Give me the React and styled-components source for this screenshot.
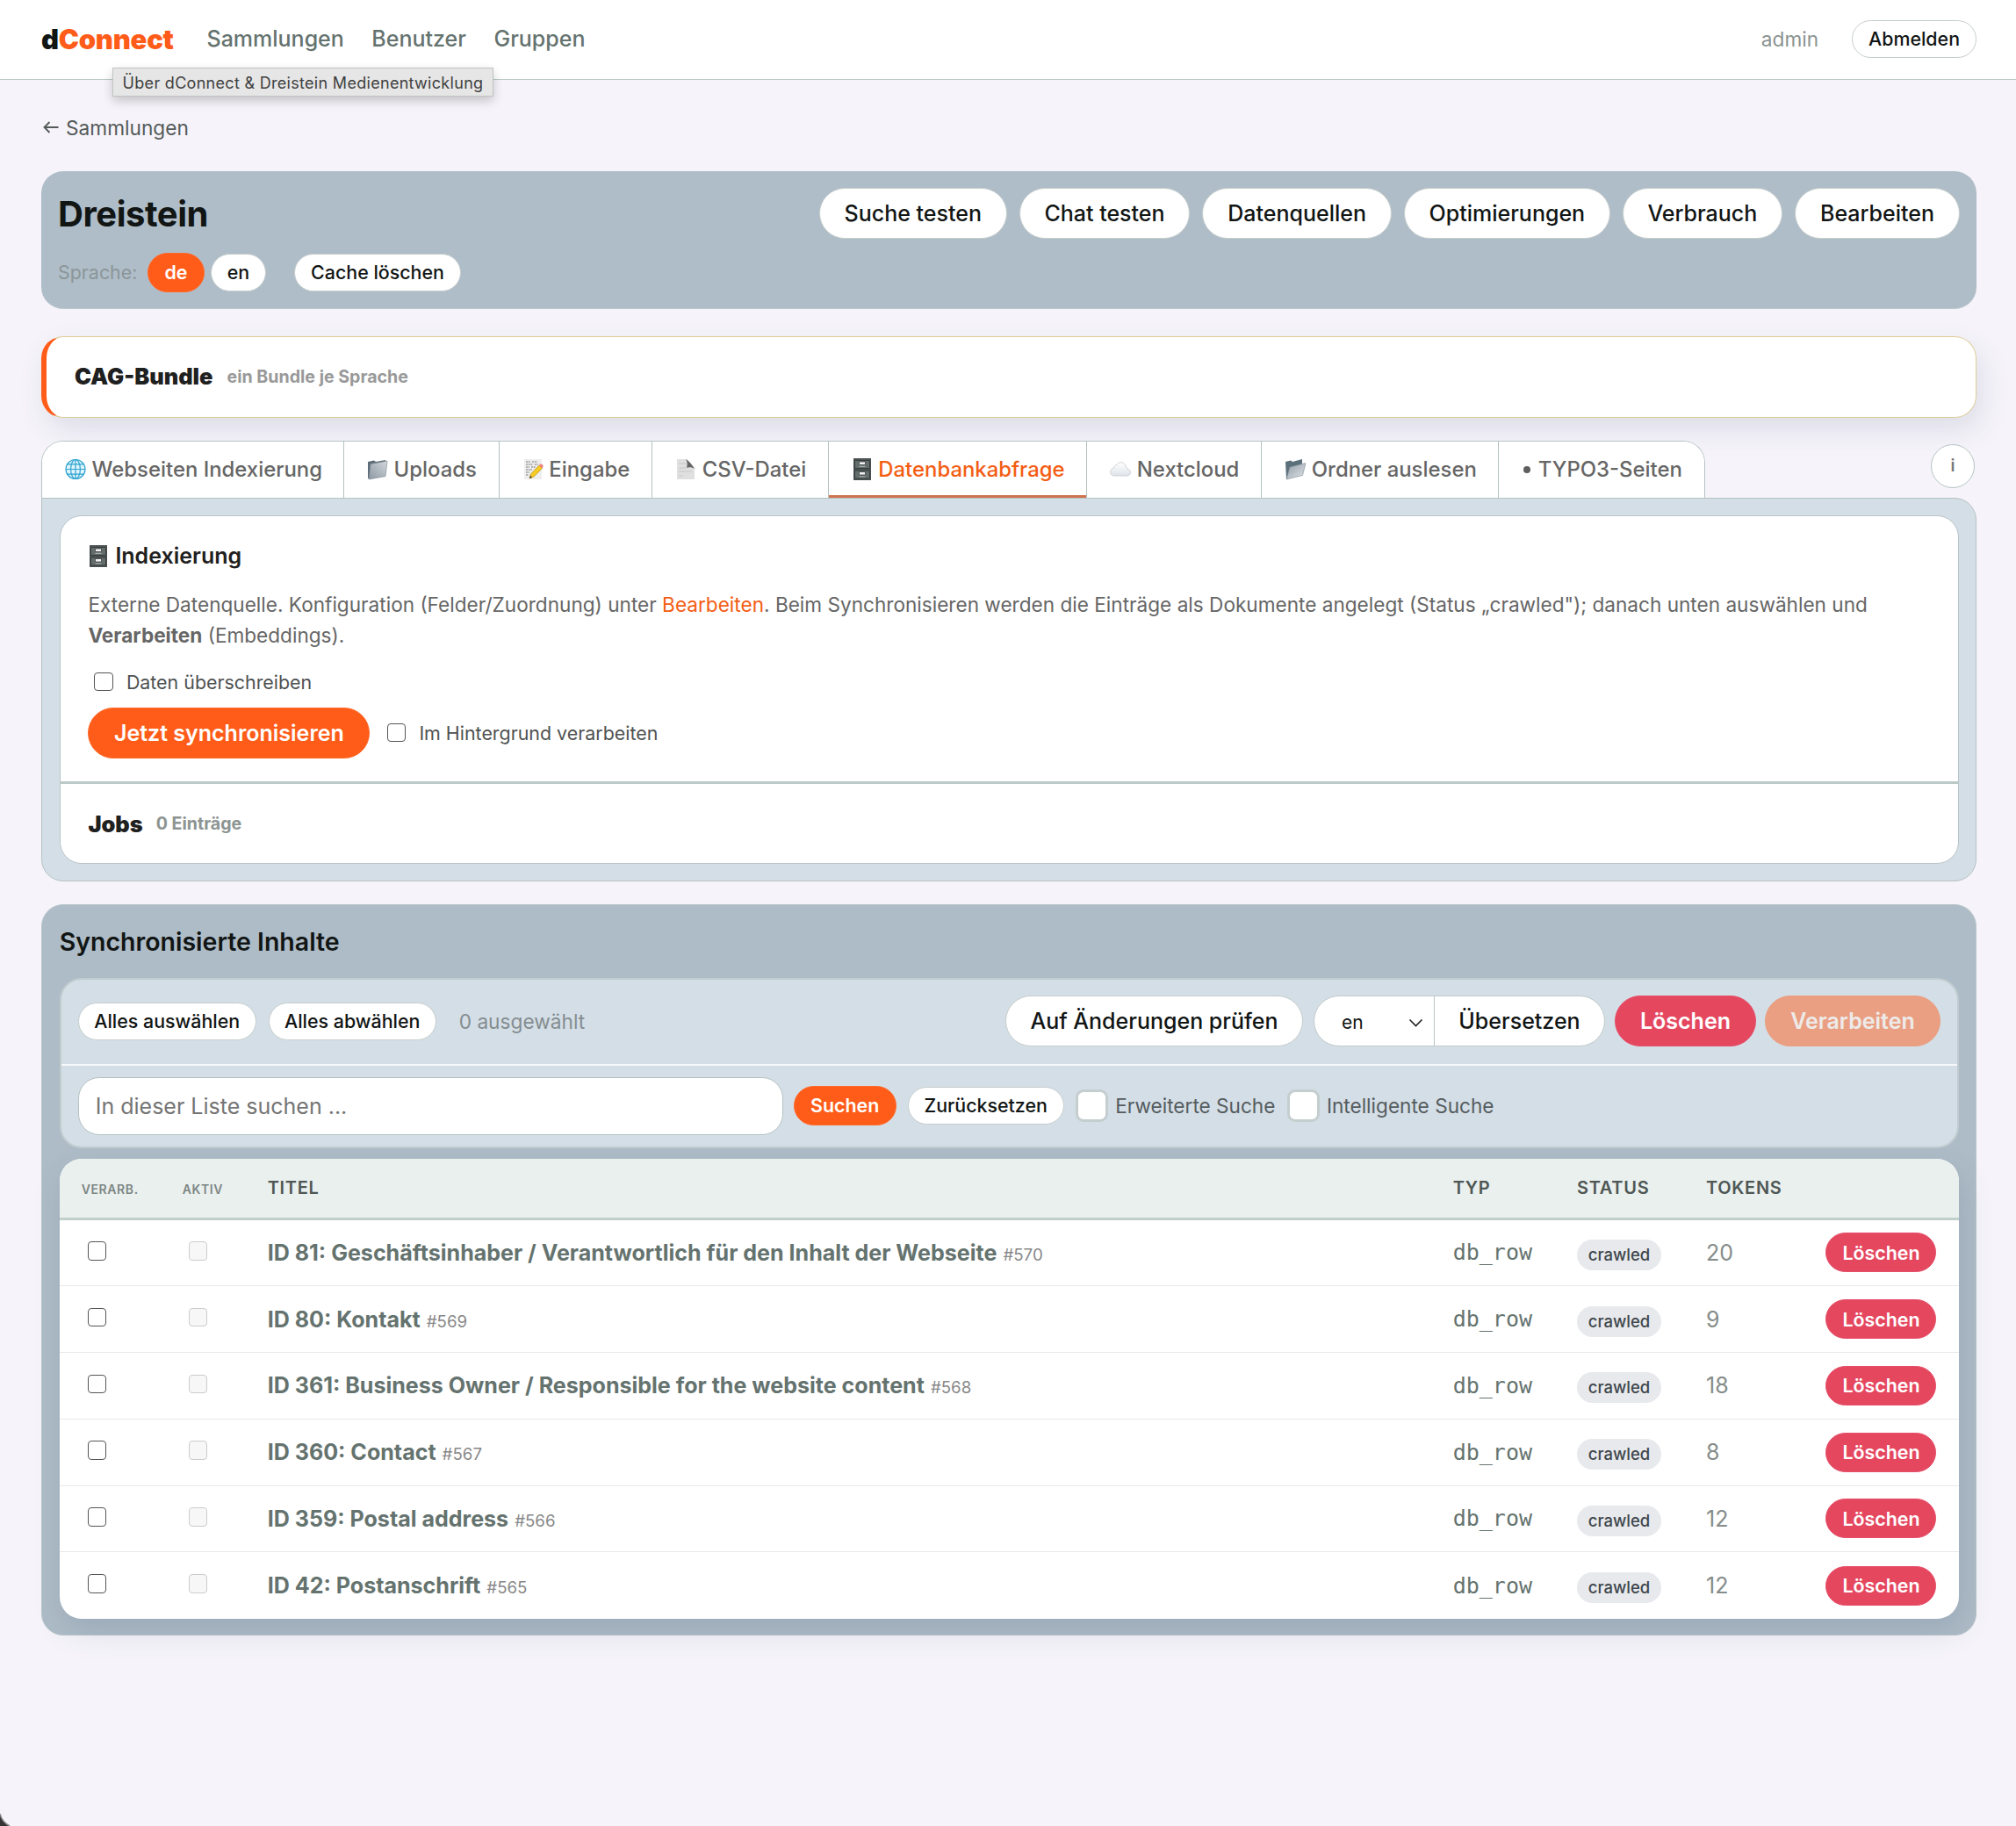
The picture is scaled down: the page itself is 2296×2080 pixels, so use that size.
import React, { useState } from 'react'
import styled, { createGlobalStyle, css } from 'styled-components'

const GlobalStyle = createGlobalStyle`
  * {
    box-sizing: border-box;
  }

  body {
    margin: 0;
    min-height: 2080px;
    background: #f6f4fa;
    color: #111514;
    font-family: Inter, "Liberation Sans", sans-serif;
    font-size: 25px;
    overflow: hidden;
  }

  button, input {
    font-family: inherit;
  }
`

const Page = styled.div`
  position: relative;
  height: 2080px;
  overflow: hidden;
  white-space: nowrap;
`

const Header = styled.header`
  position: relative;
  display: flex;
  align-items: center;
  height: 91px;
  padding: 0 45px 2px 47px;
  background: #fff;
  border-bottom: 1.5px solid #b9c9c5;
`

const Logo = styled.div`
  width: 188.5px;
  font-size: 31px;
  font-weight: 900;
  letter-spacing: -0.25px;

  span {
    color: #ff5c19;
  }
`

const Nav = styled.nav`
  display: flex;
  gap: 31.5px;
  flex: 1;
`

const NavLink = styled.a`
  font-size: 25px;
  font-weight: 500;
  color: #65736f;
`

const UserName = styled.span`
  margin-right: 38px;
  font-size: 22.6px;
  color: #8b9391;
`

const Tooltip = styled.div`
  position: absolute;
  z-index: 5;
  left: 128px;
  top: 77px;
  width: 434px;
  height: 33px;
  border: 1px solid #bfc3c4;
  background: #e6e6e6;
  box-shadow: 0 5px 12px rgba(0, 0, 0, 0.2);
  color: #3f3f3f;
  font-size: 18px;
  letter-spacing: 0.3px;
  line-height: 33px;
  text-align: center;
`

const Main = styled.main`
  padding: 0 45px 0 47px;
`

const BackLink = styled.a`
  display: flex;
  align-items: center;
  gap: 7px;
  margin: 36px 0 32px;
  height: 36px;
  padding-left: 1px;
  font-size: 22.7px;
  color: #555b5a;

  svg {
    width: 20px;
    height: 20px;
  }
`

const pill = css`
  display: flex;
  align-items: center;
  justify-content: center;
  padding: 0;
  border: 1.5px solid #c6cdcc;
  border-radius: 30px;
  background: #fff;
  color: #111514;
  white-space: nowrap;
`

const variants = {
  primary: css`
    background: #ff5c19;
    border-color: #ff6a2a;
    color: #fff;
    font-weight: 600;
  `,
  danger: css`
    background: #e5475f;
    border-color: #e5506a;
    color: #fff;
    font-weight: 600;
  `,
  muted: css`
    background: #ea9f82;
    border-color: #ea9f82;
    color: #edebe9;
    font-weight: 600;
  `,
}

const Button = styled.button`
  ${pill}
  flex: none;
  width: ${props => props.$w}px;
  height: ${props => props.$h || 58}px;
  font-size: 25px;
  font-weight: 500;
  ${props => variants[props.$kind]}
`

const SmallButton = styled.button`
  ${pill}
  flex: none;
  width: ${props => props.$w}px;
  height: ${props => props.$h || 43}px;
  font-size: 21.4px;
  font-weight: 500;
  ${props => variants[props.$kind]}
`

const Hero = styled.section`
  height: 157px;
  padding: 19px 19px 0 19px;
  border-radius: 25px;
  background: #afbdc8;
  border-bottom: 1.5px solid #bccacd;
`

const HeroTop = styled.div`
  display: flex;
  align-items: center;
  justify-content: space-between;
  height: 58px;
`

const Title = styled.h1`
  margin: 0;
  font-size: 40px;
  font-weight: 700;
  letter-spacing: -0.45px;
`

const HeroActions = styled.div`
  display: flex;
  gap: 14.2px;
`

const LanguageRow = styled.div`
  display: flex;
  align-items: center;
  height: 45px;
  margin-top: 15.5px;
`

const LanguageLabel = styled.span`
  width: 102px;
  font-size: 21.4px;
  color: #8b9698;
`

const Spacer = styled.div`
  flex: ${props => (props.$w ? 'none' : 1)};
  width: ${props => props.$w || 0}px;
`

const BundleCard = styled.section`
  display: flex;
  align-items: center;
  gap: 16px;
  height: 93px;
  margin-top: 31px;
  padding-left: 32px;
  padding-bottom: 2px;
  border: 1.5px solid #decd98;
  border-left: 6px solid #ff5c19;
  border-radius: 25px;
  background: #fff;
  box-shadow: 6px 14px 32px rgba(60, 70, 110, 0.13);
`

const Strong = styled.h2`
  margin: 0;
  font-size: 25.4px;
  font-weight: 900;
  color: #1f2020;
`

const Hint = styled.span`
  font-size: 19.6px;
  font-weight: 700;
  color: ${props => props.$color || '#999'};
`

const TabBar = styled.div`
  position: relative;
  display: flex;
  height: 65px;
  margin-top: 26px;
`

const TabList = styled.div`
  display: flex;
  border: 1.5px solid #b4c2c2;
  border-bottom: 0;
  border-radius: 25px 25px 0 0;
  background: #fff;
  overflow: hidden;
`

const Tab = styled.button`
  display: flex;
  align-items: center;
  gap: 6.5px;
  width: ${props => props.$w}px;
  padding: 0 0 2px 26px;
  border: 0;
  border-right: 1.5px solid #b4c2c2;
  background: #fff;
  color: #666;
  font-size: 23.9px;
  font-weight: 500;
  white-space: nowrap;
  ${props => props.$active && css`
    color: #f45d14;
    box-shadow: inset 0 -3px 0 #cf7350;
  `}

  &:last-child {
    border-right: 0;
  }

  svg {
    flex: none;
    width: 24px;
    height: 25px;
  }
`

const Dot = styled.span`
  width: 8px;
  height: 8px;
  margin: 2px 2px 0 2px;
  border-radius: 50%;
  background: #5f5f5f;
`

const InfoButton = styled.button`
  ${pill}
  width: 50px;
  height: 50px;
  margin: 3.5px 2px 0 auto;
  border-color: #b4c2c2;
  border-radius: 50%;
  color: #777;
  font-size: 19px;
  font-weight: 600;
`

const TabPanel = styled.section`
  height: 437px;
  padding: 19px 19px 0 19.7px;
  border: 1.5px solid #b4c2c2;
  border-radius: 0 25px 25px 25px;
  background: #d4dee6;
`

const Card = styled.div`
  height: 397px;
  border: 1.5px solid #b9c4c8;
  border-radius: 25px;
  background: #fff;
`

const IndexSection = styled.div`
  height: 305px;
  padding: 27px 31.7px 0;
  border-bottom: 3px solid #bccac7;
`

const CardTitle = styled.h3`
  display: flex;
  align-items: center;
  gap: 7px;
  height: 36px;
  margin: 0;
  font-size: 25px;
  font-weight: 600;
  color: #1f2020;

  svg {
    width: 24px;
    height: 25px;
  }
`

const Description = styled.p`
  margin: 19.5px 0 17.5px;
  font-size: 22.6px;
  line-height: 35.3px;
  color: #666;

  a {
    color: #f45d14;
  }
`

const CheckRow = styled.label`
  display: flex;
  align-items: center;
  gap: 15px;
  height: 36px;
  margin-left: ${props => props.$indent || 0}px;
  font-size: 21.4px;
  color: #4f5252;
`

const Checkbox = styled.input`
  appearance: none;
  flex: none;
  width: 21.5px;
  height: 21.5px;
  margin: 0;
  border: 1.5px solid #555;
  border-radius: 4px;
  background: #fff;

  &:disabled {
    border-color: #ccc;
    background: #f7f7f7;
  }
`

const SyncRow = styled.div`
  display: flex;
  align-items: center;
  margin-top: 11px;
`

const JobsSection = styled.div`
  display: flex;
  align-items: center;
  gap: 15px;
  height: 90px;
  padding: 0 31.7px;
`

const ContentPanel = styled.section`
  height: 833px;
  margin-top: 26px;
  padding: 0 19px 0 19.7px;
  border: 1.5px solid #b9c6ca;
  border-radius: 25px;
  background: #aebcc7;
`

const PanelTitle = styled.h2`
  margin: 0;
  height: 83px;
  font-size: 28.5px;
  font-weight: 600;
  line-height: 84px;
`

const Toolbar = styled.div`
  height: 194px;
  border: 2px solid #c1cccf;
  border-radius: 25px;
  background: #d4dee6;
`

const ToolRow = styled.div`
  display: flex;
  align-items: center;
  height: 98px;
  padding: 0 19px 1.5px 19px;
  border-bottom: 2px solid #f6f8fa;

  &:last-child {
    height: 92px;
    padding-bottom: 2px;
    border-bottom: 0;
  }
`

const Count = styled.span`
  margin-left: 26px;
  font-size: 22.7px;
  color: #848d91;
`

const TranslateGroup = styled.div`
  display: flex;
  width: 332px;
  height: 58px;
  margin: 0 11px 0 12px;
  border: 1.5px solid #c1caca;
  border-radius: 30px;
  background: #fff;
`

const LanguageSelect = styled.div`
  display: flex;
  align-items: center;
  justify-content: space-between;
  width: 137px;
  padding: 3px 12px 0 31px;
  border-right: 1.5px solid #b9c4c4;
  font-size: 21px;

  svg {
    width: 17px;
    height: 10px;
  }
`

const TranslateLabel = styled.div`
  flex: 1;
  font-size: 25px;
  font-weight: 500;
  line-height: 56px;
  text-align: center;
`

const SearchInput = styled.input`
  width: 803px;
  height: 66px;
  margin: 1px 12px 0 0;
  padding: 0 19px;
  border: 1.5px solid #b4c2c2;
  border-radius: 24px;
  background: #fff;
  font-size: 25px;

  &::placeholder {
    color: #757575;
  }
`

const Option = styled.label`
  display: flex;
  align-items: center;
  gap: 8px;
  margin-left: 13.5px;
  font-size: 22.6px;
  color: #555c60;
`

const BigCheckbox = styled.input`
  appearance: none;
  width: 37px;
  height: 37px;
  margin: 0;
  border: 3px solid #c5cecf;
  border-radius: 9px;
  background: #fff;
`

const Table = styled.div`
  height: 524px;
  margin-top: 12px;
  border-radius: 25px;
  background: #fff;
  box-shadow: 4px 14px 34px rgba(60, 80, 120, 0.16);
  overflow: hidden;
`

const rowGrid = css`
  display: grid;
  grid-template-columns: 140px 97px 1350px 141.3px 147px 136.5px 1fr;
  align-items: center;
`

const TableHead = styled.div`
  ${rowGrid}
  height: 69.5px;
  border-bottom: 3px solid #bfcfca;
  background: #eaf0ee;
  color: #4f5755;
  font-size: 20px;
  font-weight: 600;
  letter-spacing: 0.7px;
`

const SmallHead = styled.span`
  padding: 3px 0 0 ${props => props.$pad || 0}px;
  font-size: 14px;
  letter-spacing: 0.6px;
  color: #7d8684;
`

const Row = styled.div`
  ${rowGrid}
  height: 75.75px;
  border-bottom: 1.5px solid #e6eae9;

  &:last-child {
    border-bottom: 0;
  }
`

const CheckCell = styled.div`
  display: flex;
  padding: 0 0 4px ${props => props.$pad}px;
`

const ItemTitle = styled.div`
  font-size: 25.05px;
  font-weight: 700;
  color: #65736f;

  span {
    margin-left: 7px;
    font-size: 18.7px;
    font-weight: 400;
    color: #888;
  }
`

const Mono = styled.code`
  font-family: "DejaVu Sans Mono", "Liberation Mono", monospace;
  font-size: 25px;
  color: #65736f;
`

const StatusBadge = styled.span`
  justify-self: start;
  width: 96px;
  height: 35px;
  margin-top: 5px;
  border-radius: 18px;
  background: #e7e9ec;
  color: #3f474d;
  font-size: 18.5px;
  font-weight: 500;
  line-height: 34px;
  text-align: center;
`

const Tokens = styled.span`
  font-size: 25px;
  color: #858c8a;
`

const WindowCorner = styled.svg`
  position: absolute;
  left: 0;
  bottom: 0;
  width: 12px;
  height: 14px;
`

const GlobeIcon = () => (
  <svg viewBox="0 0 24 24" fill="none" stroke="#2ea3cf" strokeWidth="1.2">
    <circle cx="12" cy="12" r="11" fill="#dff4fc" />
    <ellipse cx="12" cy="12" rx="5.4" ry="11" />
    <path d="M12 1v22M1 12h22M3 6.3h18M3 17.7h18" />
  </svg>
)

const FolderIcon = () => (
  <svg viewBox="0 0 24 25">
    <defs>
      <linearGradient id="folder" x1="0" y1="1" x2="1" y2="0">
        <stop offset="0" stopColor="#8c98a3" />
        <stop offset="1" stopColor="#d3d7db" />
      </linearGradient>
    </defs>
    <path d="M1 4l7-1.500 2 1.500 11-2v18L1 23z" fill="#5d6d79" />
    <path d="M4 6.500L23 3l-2 17.500L2 24z" fill="url(#folder)" stroke="#73818c" strokeWidth=".6" />
  </svg>
)

const OpenFolderIcon = () => (
  <svg viewBox="0 0 24 25">
    <defs>
      <linearGradient id="openFolder" x1="0" y1="0" x2="1" y2="1">
        <stop offset="0" stopColor="#909ca6" />
        <stop offset="1" stopColor="#e3e6e9" />
      </linearGradient>
    </defs>
    <path d="M1 4l6-1.500 2 1.500 11-3v16L2 24z" fill="#5c707c" />
    <path d="M6 10L24 5.500l-3.500 14L2 24z" fill="url(#openFolder)" stroke="#7d8c96" strokeWidth=".6" />
  </svg>
)

const MemoIcon = () => (
  <svg viewBox="0 0 24 25">
    <path d="M2 1h20v23H2z" fill="#eee" />
    <path d="M4 4h5m2 0h6M4 7h8m2 0h4M4 10h4m2 0h5M4 13h7M4 16h4M4 19h3" stroke="#777" strokeWidth="1.100" strokeDasharray="2 .7" />
    <path d="M8 23l1.500-5L19 8l3.500 3.500L13 21z" fill="#f8cb22" stroke="#a78415" strokeWidth=".6" />
    <path d="M19 8l1.500-1.500q2-.5 3.300 2.300L22.500 11.500z" fill="#ee7f79" />
    <path d="M8 23l1-3.200 2 2z" fill="#443c30" />
  </svg>
)

const PageIcon = () => (
  <svg viewBox="0 0 24 25">
    <path d="M2 1h11l9 10v13H2z" fill="#e0e0e0" />
    <path d="M12 1c4 2.500 7 6 10 11-3-2-6-2.200-9-1.200C14.200 7 13.800 4 12 1z" fill="#666" />
    <path d="M4 6h8M4 11h8M4 15h15M4 20h5" stroke="#c6c6c6" />
  </svg>
)

const CabinetIcon = () => (
  <svg viewBox="0 0 24 25">
    <path d="M2 0h20v25H2z" fill="#4c5252" />
    <path d="M3.500 2.500h17v9h-17zM3.500 14h17v9h-17z" fill="#656c6c" stroke="#383e3e" />
    <path d="M8.500 4h7v3.500h-7zM8.500 15.500h7V19h-7z" fill="#f2f2f2" stroke="#3b4040" strokeWidth=".8" />
    <path d="M8.500 9.300h7M8.500 20.800h7" stroke="#a2a8a8" strokeWidth="1.200" />
  </svg>
)

const CloudIcon = () => (
  <svg viewBox="0 0 24 25">
    <defs>
      <linearGradient id="cloud" x1="0" y1="0" x2="0" y2="1">
        <stop offset="0" stopColor="#fff" />
        <stop offset="1" stopColor="#dfe4ea" />
      </linearGradient>
    </defs>
    <path
      d="M5 20C1.500 20 .6 17.500.6 15.500.6 13 2.500 11 5 11c-.3-2 1.200-3.600 3-3.400C8.800 5.500 10.800 4.500 13 4.700c2.700.2 4.600 2 4.700 4.600 1.500.3 2.200 1.500 2 3 2.500.2 3.800 1.700 3.700 3.900C23.300 18.700 21.500 20 19 20z"
      fill="url(#cloud)"
      stroke="#c5cbd2"
      strokeWidth=".8"
    />
  </svg>
)

const ArrowLeft = () => (
  <svg viewBox="0 0 20 20" fill="none" stroke="currentColor" strokeWidth="1.900">
    <path d="M18.500 10H2.500M8.500 4L2.500 10l6 6" />
  </svg>
)

const Chevron = () => (
  <svg viewBox="0 0 17 10" fill="none" stroke="#222" strokeWidth="1.600">
    <path d="M1.500 1.500l7 7 7-7" />
  </svg>
)

const heroActions = [
  { label: 'Suche testen', w: 213.5 },
  { label: 'Chat testen', w: 194.5 },
  { label: 'Datenquellen', w: 215.5 },
  { label: 'Optimierungen', w: 234.5 },
  { label: 'Verbrauch', w: 182 },
  { label: 'Bearbeiten', w: 188 },
]

const tabs = [
  { label: 'Webseiten Indexierung', icon: GlobeIcon, w: 344 },
  { label: 'Uploads', icon: FolderIcon, w: 176.8 },
  { label: 'Eingabe', icon: MemoIcon, w: 174.5 },
  { label: 'CSV-Datei', icon: PageIcon, w: 200.5 },
  { label: 'Datenbankabfrage', icon: CabinetIcon, w: 294.5 },
  { label: 'Nextcloud', icon: CloudIcon, w: 199 },
  { label: 'Ordner auslesen', icon: OpenFolderIcon, w: 270 },
  { label: 'TYPO3-Seiten', icon: Dot, w: 233.5 },
]

const rows = [
  { id: 570, title: 'ID 81: Geschäftsinhaber / Verantwortlich für den Inhalt der Webseite', tokens: 20 },
  { id: 569, title: 'ID 80: Kontakt', tokens: 9 },
  { id: 568, title: 'ID 361: Business Owner / Responsible for the website content', tokens: 18 },
  { id: 567, title: 'ID 360: Contact', tokens: 8 },
  { id: 566, title: 'ID 359: Postal address', tokens: 12 },
  { id: 565, title: 'ID 42: Postanschrift', tokens: 12 },
]

const App = () => {
  const [activeTab, setActiveTab] = useState('Datenbankabfrage')
  const [query, setQuery] = useState('')

  return (
    <Page>
      <GlobalStyle />
      <Header>
        <Logo>d<span>Connect</span></Logo>
        <Nav>
          <NavLink>Sammlungen</NavLink>
          <NavLink>Benutzer</NavLink>
          <NavLink>Gruppen</NavLink>
        </Nav>
        <UserName>admin</UserName>
        <SmallButton $w={142}>Abmelden</SmallButton>
        <Tooltip>Über dConnect &amp; Dreistein Medienentwicklung</Tooltip>
      </Header>

      <Main>
        <BackLink><ArrowLeft />Sammlungen</BackLink>

        <Hero>
          <HeroTop>
            <Title>Dreistein</Title>
            <HeroActions>
              {heroActions.map(action => (
                <Button key={action.label} $w={action.w}>{action.label}</Button>
              ))}
            </HeroActions>
          </HeroTop>
          <LanguageRow>
            <LanguageLabel>Sprache:</LanguageLabel>
            <SmallButton $w={65} $h={45} $kind="primary">de</SmallButton>
            <Spacer $w={7} />
            <SmallButton $w={63}>en</SmallButton>
            <Spacer $w={32} />
            <SmallButton $w={190}>Cache löschen</SmallButton>
          </LanguageRow>
        </Hero>

        <BundleCard>
          <Strong>CAG-Bundle</Strong>
          <Hint>ein Bundle je Sprache</Hint>
        </BundleCard>

        <TabBar>
          <TabList>
            {tabs.map(({ label, icon: Icon, w }) => (
              <Tab key={label} $w={w} $active={label === activeTab} onClick={() => setActiveTab(label)}>
                <Icon />
                {label}
              </Tab>
            ))}
          </TabList>
          <InfoButton>i</InfoButton>
        </TabBar>

        <TabPanel>
          <Card>
            <IndexSection>
              <CardTitle><CabinetIcon />Indexierung</CardTitle>
              <Description>
                Externe Datenquelle. Konfiguration (Felder/Zuordnung) unter <a>Bearbeiten</a>. Beim Synchronisieren
                {' '}werden die Einträge als Dokumente angelegt (Status „crawled"); danach unten auswählen und
                <br />
                <b>Verarbeiten</b> (Embeddings).
              </Description>
              <CheckRow $indent={7}>
                <Checkbox type="checkbox" />
                Daten überschreiben
              </CheckRow>
              <SyncRow>
                <Button $w={321} $kind="primary">Jetzt synchronisieren</Button>
                <CheckRow $indent={19.5}>
                  <Checkbox type="checkbox" />
                  Im Hintergrund verarbeiten
                </CheckRow>
              </SyncRow>
            </IndexSection>
            <JobsSection>
              <Strong>Jobs</Strong>
              <Hint $color="#8d9492">0 Einträge</Hint>
            </JobsSection>
          </Card>
        </TabPanel>

        <ContentPanel>
          <PanelTitle>Synchronisierte Inhalte</PanelTitle>
          <Toolbar>
            <ToolRow>
              <SmallButton $w={203}>Alles auswählen</SmallButton>
              <Spacer $w={14} />
              <SmallButton $w={191}>Alles abwählen</SmallButton>
              <Count>0 ausgewählt</Count>
              <Spacer />
              <Button $w={339}>Auf Änderungen prüfen</Button>
              <TranslateGroup>
                <LanguageSelect>en<Chevron /></LanguageSelect>
                <TranslateLabel>Übersetzen</TranslateLabel>
              </TranslateGroup>
              <Button $w={161} $kind="danger">Löschen</Button>
              <Spacer $w={10} />
              <Button $w={200} $kind="muted">Verarbeiten</Button>
            </ToolRow>
            <ToolRow>
              <SearchInput
                placeholder="In dieser Liste suchen ..."
                value={query}
                onChange={e => setQuery(e.target.value)}
              />
              <SmallButton $w={117} $h={45} $kind="primary">Suchen</SmallButton>
              <Spacer $w={13} />
              <SmallButton $w={178}>Zurücksetzen</SmallButton>
              <Option><BigCheckbox type="checkbox" />Erweiterte Suche</Option>
              <Option><BigCheckbox type="checkbox" />Intelligente Suche</Option>
            </ToolRow>
          </Toolbar>

          <Table>
            <TableHead>
              <SmallHead $pad={25}>VERARB.</SmallHead>
              <SmallHead>AKTIV</SmallHead>
              <span>TITEL</span>
              <span>TYP</span>
              <span>STATUS</span>
              <span>TOKENS</span>
            </TableHead>
            {rows.map(row => (
              <Row key={row.id}>
                <CheckCell $pad={32}><Checkbox type="checkbox" /></CheckCell>
                <CheckCell $pad={7}><Checkbox type="checkbox" disabled /></CheckCell>
                <ItemTitle>{row.title}<span>#{row.id}</span></ItemTitle>
                <Mono>db_row</Mono>
                <StatusBadge>crawled</StatusBadge>
                <Tokens>{row.tokens}</Tokens>
                <SmallButton $w={126} $h={45} $kind="danger">Löschen</SmallButton>
              </Row>
            ))}
          </Table>
        </ContentPanel>
      </Main>

      <WindowCorner viewBox="0 0 12 14">
        <path d="M0 0q2 9 11 14H0z" fill="#333" />
        <path d="M0 0q2 9 11 14" fill="none" stroke="#8a8a8a" strokeWidth="1.500" />
      </WindowCorner>
    </Page>
  )
}

export default App
